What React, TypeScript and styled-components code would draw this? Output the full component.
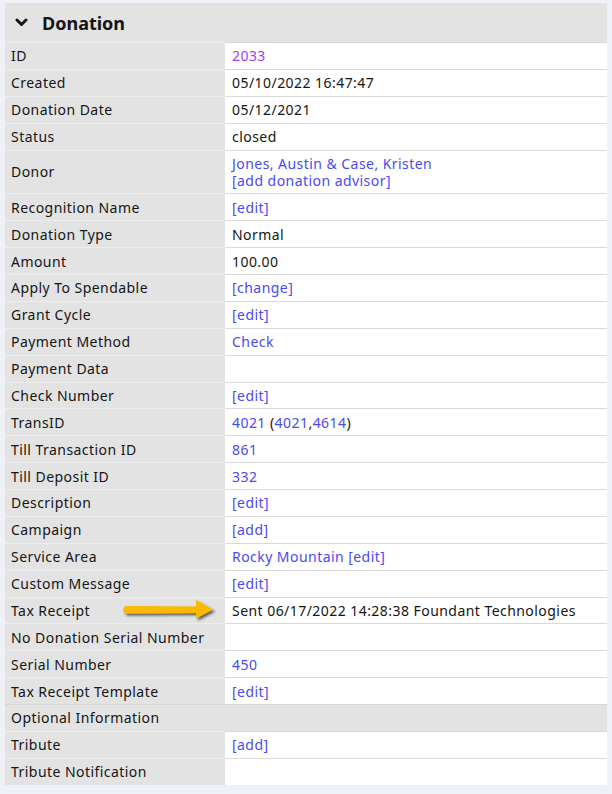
import React from "react";
import styled, { createGlobalStyle } from "styled-components";

const GlobalStyle = createGlobalStyle`
  html, body { margin: 0; padding: 0; }
  body {
    background: #eff1f6;
    font-family: "Noto Sans", "Open Sans", "DejaVu Sans", sans-serif;
    font-size: 14px;
    letter-spacing: 0.45px;
    color: #151515;
  }
`;

const Panel = styled.section`
  margin: 3px 5px 0 5px;
  background: #ffffff;
`;

const Header = styled.div`
  display: flex;
  align-items: center;
  gap: 14px;
  height: 39px;
  padding-left: 10px;
  background: #e3e3e3;
  font-size: 18px;
  letter-spacing: 0;
  font-weight: 700;
  color: #141414;
`;

const Grid = styled.div`
  display: grid;
  grid-template-columns: 220px 1fr;
`;

const Label = styled.div<{ $section?: boolean }>`
  position: relative;
  background: #e3e3e3;
  border-top: 1px solid #ededed;
  padding: 4.45px 6px;
  line-height: 17px;
  display: flex;
  align-items: center;
  white-space: nowrap;
  ${(p) => (p.$section ? "grid-column: 1 / span 2; border-top-color: #d6d6d6;" : "")}
`;

const Value = styled.div`
  background: #ffffff;
  border-top: 1px solid #d9d9d9;
  padding: 4.45px 7px;
  line-height: 17px;
  min-height: 17px;
  display: flex;
  flex-direction: column;
  justify-content: center;
  white-space: nowrap;
`;

const Link = styled.a<{ $visited?: boolean }>`
  color: ${(p) => (p.$visited ? "#9a3cf5" : "#4a4af2")};
  text-decoration: none;
  cursor: pointer;
`;

const ArrowMark = styled.svg`
  position: absolute;
  left: 114px;
  top: -3px;
  width: 100px;
  height: 30px;
  overflow: visible;
`;

const Chevron = () => (
  <svg width="13" height="9" viewBox="0 0 13 9">
    <polyline points="2,2 6.5,6.5 11,2" fill="none" stroke="#141414" strokeWidth="3" strokeLinecap="round" strokeLinejoin="round" />
  </svg>
);

const Arrow = () => (
  <ArrowMark viewBox="0 0 100 30">
    <defs>
      <filter id="sh" x="-20%" y="-50%" width="140%" height="200%">
        <feDropShadow dx="2" dy="2" stdDeviation="1.4" floodColor="#000" floodOpacity="0.65" />
      </filter>
    </defs>
    <g filter="url(#sh)" fill="#fbb901">
      <path d="M8 11 L80 11.5 L80 18 L8 18.5 A3.75 3.75 0 0 1 8 11 Z" />
      <polygon points="77,5 94,14.5 77,23.5" />
    </g>
  </ArrowMark>
);

type Row = { label: string; value?: React.ReactNode; section?: boolean; arrow?: boolean };

const rows: Row[] = [
  { label: "ID", value: <Link $visited>2033</Link> },
  { label: "Created", value: "05/10/2022 16:47:47" },
  { label: "Donation Date", value: "05/12/2021" },
  { label: "Status", value: "closed" },
  {
    label: "Donor",
    value: (
      <>
        <Link>Jones, Austin &amp; Case, Kristen</Link>
        <Link>[add donation advisor]</Link>
      </>
    ),
  },
  { label: "Recognition Name", value: <Link>[edit]</Link> },
  { label: "Donation Type", value: "Normal" },
  { label: "Amount", value: "100.00" },
  { label: "Apply To Spendable", value: <Link>[change]</Link> },
  { label: "Grant Cycle", value: <Link>[edit]</Link> },
  { label: "Payment Method", value: <Link>Check</Link> },
  { label: "Payment Data", value: "" },
  { label: "Check Number", value: <Link>[edit]</Link> },
  {
    label: "TransID",
    value: (
      <span>
        <Link>4021</Link> (<Link>4021</Link>,<Link>4614</Link>)
      </span>
    ),
  },
  { label: "Till Transaction ID", value: <Link>861</Link> },
  { label: "Till Deposit ID", value: <Link>332</Link> },
  { label: "Description", value: <Link>[edit]</Link> },
  { label: "Campaign", value: <Link>[add]</Link> },
  { label: "Service Area", value: <Link>Rocky Mountain [edit]</Link> },
  { label: "Custom Message", value: <Link>[edit]</Link> },
  { label: "Tax Receipt", value: "Sent 06/17/2022 14:28:38 Foundant Technologies", arrow: true },
  { label: "No Donation Serial Number", value: "" },
  { label: "Serial Number", value: <Link>450</Link> },
  { label: "Tax Receipt Template", value: <Link>[edit]</Link> },
  { label: "Optional Information", section: true },
  { label: "Tribute", value: <Link>[add]</Link> },
  { label: "Tribute Notification", value: "" },
];

export default function App() {
  return (
    <>
      <GlobalStyle />
      <Panel>
        <Header>
          <Chevron />
          <span>Donation</span>
        </Header>
        <Grid>
          {rows.map((r) =>
            r.section ? (
              <Label key={r.label} $section>
                {r.label}
              </Label>
            ) : (
              <React.Fragment key={r.label}>
                <Label>
                  {r.label}
                  {r.arrow && <Arrow />}
                </Label>
                <Value>{r.value}</Value>
              </React.Fragment>
            )
          )}
        </Grid>
      </Panel>
    </>
  );
}
